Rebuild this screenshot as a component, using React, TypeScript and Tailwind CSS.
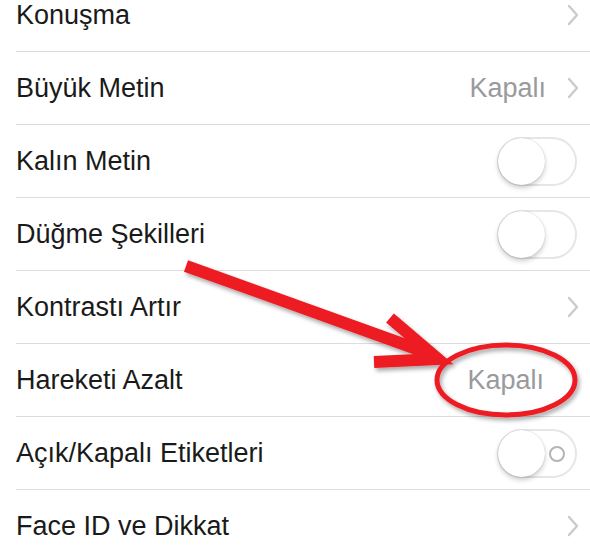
import type { ReactNode } from "react";

type Accessory =
  | { kind: "chevron"; value?: string }
  | { kind: "value"; value: string }
  | { kind: "toggle"; labels?: boolean };

const rows: { label: string; accessory: Accessory }[] = [
  { label: "Konuşma", accessory: { kind: "chevron" } },
  { label: "Büyük Metin", accessory: { kind: "chevron", value: "Kapalı" } },
  { label: "Kalın Metin", accessory: { kind: "toggle" } },
  { label: "Düğme Şekilleri", accessory: { kind: "toggle" } },
  { label: "Kontrastı Artır", accessory: { kind: "chevron" } },
  { label: "Hareketi Azalt", accessory: { kind: "value", value: "Kapalı" } },
  { label: "Açık/Kapalı Etiketleri", accessory: { kind: "toggle", labels: true } },
  { label: "Face ID ve Dikkat", accessory: { kind: "chevron" } },
];

function Chevron() {
  return (
    <svg width="14" height="22" viewBox="0 0 14 22" className="ml-[20px] mr-[10px]">
      <polyline
        points="3,2 11,11 3,20"
        fill="none"
        stroke="#cbcbcf"
        strokeWidth="2.4"
        strokeLinecap="round"
        strokeLinejoin="round"
      />
    </svg>
  );
}

function Toggle({ labels }: { labels?: boolean }) {
  return (
    <div className="relative mr-[13px] h-[49px] w-[80px] rounded-full border-2 border-[#e6e6e9] bg-white">
      <div className="absolute left-[-1px] top-[-1px] h-[47px] w-[47px] rounded-full bg-white shadow-[0_3px_5px_rgba(0,0,0,0.2),0_0_1px_rgba(0,0,0,0.25)]" />
      {labels && (
        <div className="absolute right-[10px] top-[15px] h-[16px] w-[16px] rounded-full border-2 border-[#b4b4b8]" />
      )}
    </div>
  );
}

function Row({ label, accessory }: { label: string; accessory: Accessory }) {
  let right: ReactNode = null;
  if (accessory.kind === "chevron") {
    right = (
      <div className="flex items-center">
        {accessory.value && <span className="text-[#9a9a9e]">{accessory.value}</span>}
        <Chevron />
      </div>
    );
  } else if (accessory.kind === "value") {
    right = <span className="mr-[46px] text-[#9a9a9e]">{accessory.value}</span>;
  } else {
    right = <Toggle labels={accessory.labels} />;
  }
  return (
    <div className="h-[73px] pl-[16px]">
      <div className="box-border flex h-full items-center justify-between border-b border-[#dcdcdf]">
        <span className="text-[#1a1a1a]">{label}</span>
        {right}
      </div>
    </div>
  );
}

export default function App() {
  return (
    <div className="relative h-[547px] w-[590px] overflow-hidden bg-white font-['Liberation_Sans',Arial,sans-serif] text-[27px]">
      <div className="mt-[-21px] flex flex-col">
        {rows.map((r) => (
          <Row key={r.label} label={r.label} accessory={r.accessory} />
        ))}
      </div>
      <svg
        className="pointer-events-none absolute left-0 top-0"
        width="590"
        height="547"
        viewBox="0 0 590 547"
      >
        <defs>
          <filter id="sh" x="-20%" y="-20%" width="140%" height="140%">
            <feDropShadow dx="2" dy="3" stdDeviation="2" floodColor="#000" floodOpacity="0.35" />
          </filter>
        </defs>
        <g filter="url(#sh)">
          <line x1="186" y1="266" x2="425" y2="352" stroke="#ec1c24" strokeWidth="12" strokeLinecap="butt" />
          <polyline
            points="390,318 438,359 374,362"
            fill="none"
            stroke="#ec1c24"
            strokeWidth="12"
            strokeLinejoin="miter"
          />
          <ellipse cx="506" cy="380" rx="69" ry="35" fill="none" stroke="#ec1c24" strokeWidth="5" />
        </g>
      </svg>
    </div>
  );
}
